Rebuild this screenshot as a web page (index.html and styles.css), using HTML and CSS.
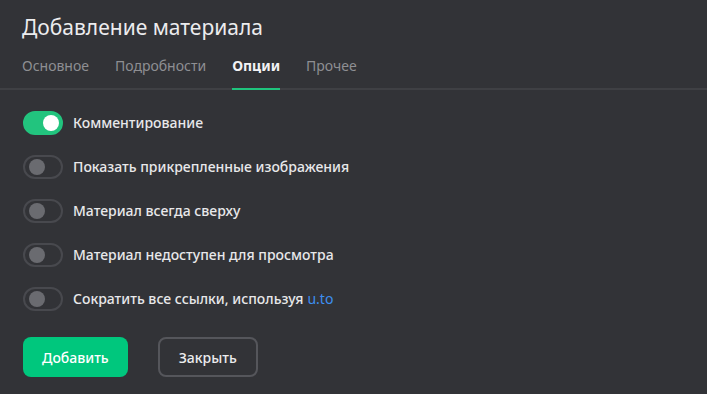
FILE: index.html
```html
<!DOCTYPE html>
<html lang="ru">
<head>
  <meta charset="UTF-8" />
  <meta name="viewport" content="width=device-width, initial-scale=1.0"/>
  <title>Добавление материала</title>
  <link rel="stylesheet" href="styles.css">
</head>
<body>
  <div class="dialog">
    <h2 class="title">Добавление материала</h2>

    <div class="tabs">
      <span class="tab">Основное</span>
      <span class="tab">Подробности</span>
      <span class="tab active">Опции</span>
      <span class="tab">Прочее</span>
    </div>

    <div class="options">
      <label class="option">
        <span class="switch on"><span class="knob"></span></span>
        Комментирование
      </label>
      <label class="option">
        <span class="switch"><span class="knob"></span></span>
        Показать прикрепленные изображения
      </label>
      <label class="option">
        <span class="switch"><span class="knob"></span></span>
        Материал всегда сверху
      </label>
      <label class="option">
        <span class="switch"><span class="knob"></span></span>
        Материал недоступен для просмотра
      </label>
      <label class="option">
        <span class="switch"><span class="knob"></span></span>
        Сократить все ссылки, используя <a class="link" href="#">u.to</a>
      </label>
    </div>

    <div class="actions">
      <button class="btn primary">Добавить</button>
      <button class="btn outline">Закрыть</button>
    </div>
  </div>
</body>
</html>
```

FILE: styles.css
```css
body {
  margin: 0;
  background: #323337;
  font-family: 'Noto Sans', 'Open Sans', sans-serif;
  color: #e6e6e8;
}

.dialog {
  height: 394px;
  overflow: hidden;
}

.title {
  margin: 0;
  padding: 12px 22px 0;
  font-size: 21px;
  font-weight: 400;
  line-height: 30px;
  color: #ececee;
}

.tabs {
  display: flex;
  gap: 26px;
  padding: 0 22px;
  margin-top: 14px;
  border-bottom: 2px solid #3f4044;
}

.tab {
  font-size: 14px;
  line-height: 20px;
  padding-bottom: 12px;
  color: #8e8f93;
  border-bottom: 2px solid transparent;
  margin-bottom: -2px;
}

.tab.active {
  color: #f2f2f4;
  font-weight: 700;
  border-bottom-color: #1fc47d;
}

.options {
  display: flex;
  flex-direction: column;
  gap: 20px;
  padding: 21px 23px 0;
}

.option {
  display: flex;
  align-items: center;
  gap: 10px;
  font-size: 14px;
  font-weight: 500;
  line-height: 24px;
  color: #e8e8ea;
}

.switch {
  box-sizing: border-box;
  width: 40px;
  height: 24px;
  border-radius: 12px;
  border: 2px solid #48494e;
  display: flex;
  align-items: center;
  padding: 0 4px;
}

.knob {
  width: 16px;
  height: 16px;
  border-radius: 50%;
  background: #6a6b70;
}

.switch.on {
  background: #22c47e;
  border-color: #22c47e;
  justify-content: flex-end;
  padding: 0 2px;
}

.switch.on .knob {
  background: #ffffff;
}

.link {
  color: #3d8ff0;
  font-weight: 400;
  text-decoration: none;
  margin-left: -6px;
}

.actions {
  display: flex;
  gap: 30px;
  padding: 26px 23px 0;
}

.btn {
  height: 40px;
  border-radius: 8px;
  font-family: inherit;
  font-size: 14px;
  font-weight: 500;
  padding: 0 19px;
  cursor: pointer;
}

.primary {
  background: #00c77d;
  border: none;
  color: #ffffff;
}

.outline {
  background: transparent;
  border: 2px solid #55565b;
  color: #ececee;
}
```
